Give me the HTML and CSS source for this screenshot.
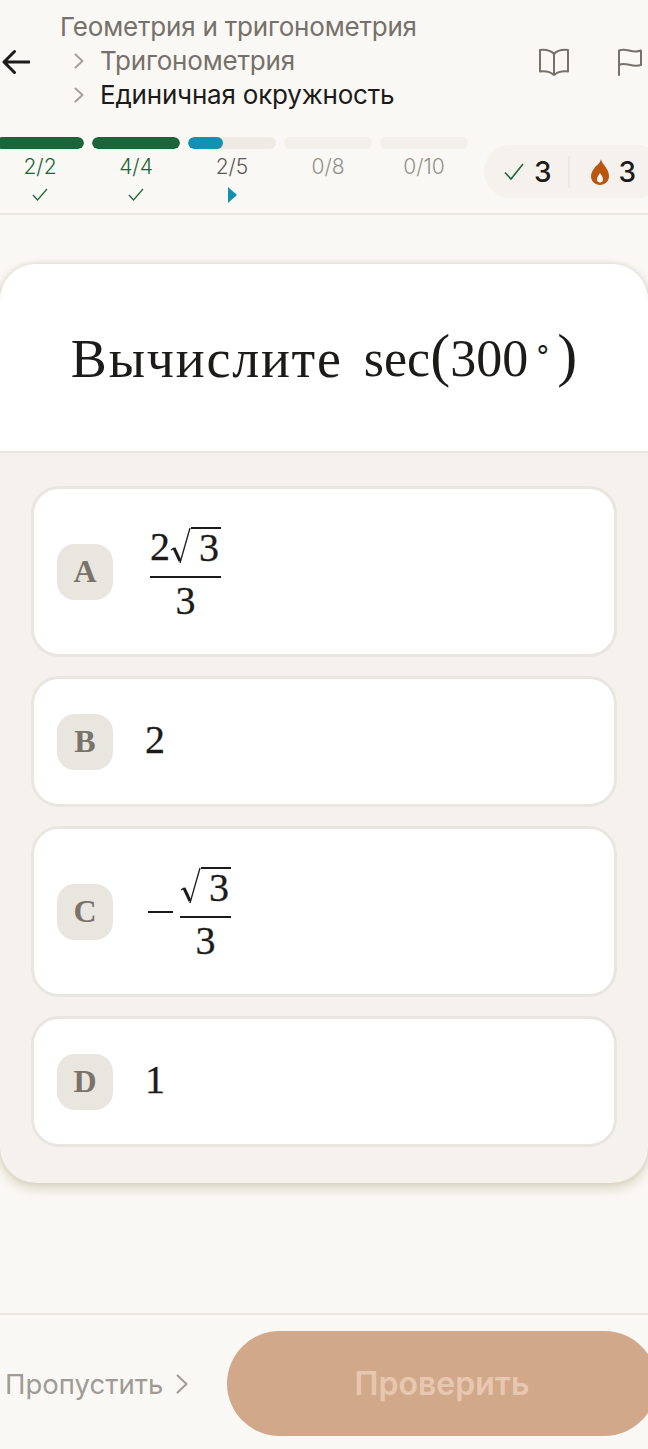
FILE: index.html
```html
<!DOCTYPE html>
<html lang="ru">

<head>
  <meta charset="UTF-8">
  <meta name="viewport" content="width=device-width, initial-scale=1.0">
  <title>Единичная окружность</title>
  <link rel="stylesheet" href="styles.css">
</head>

<body>
  <header class="top">
    <div class="top-row">
      <svg class="back" width="28" height="26" viewBox="0 0 28 26" fill="none" stroke="#1c1b19" stroke-width="3" stroke-linecap="round" stroke-linejoin="round">
        <path d="M27 13H2M12.500 2.500L2 13l10.500 10.500" />
      </svg>
      <div class="crumbs">
        <div class="crumb crumb-first">Геометрия и тригонометрия</div>
        <div class="crumb">
          <svg class="chev" width="10" height="16" viewBox="0 0 10 16" fill="none" stroke="#a5a19a" stroke-width="2" stroke-linecap="round" stroke-linejoin="round"><path d="M1.500 1.500L8.500 8l-7 6.500" /></svg>
          Тригонометрия
        </div>
        <div class="crumb crumb-current">
          <svg class="chev" width="10" height="16" viewBox="0 0 10 16" fill="none" stroke="#a5a19a" stroke-width="2" stroke-linecap="round" stroke-linejoin="round"><path d="M1.500 1.500L8.500 8l-7 6.500" /></svg>
          Единичная окружность
        </div>
      </div>
      <svg class="book" width="30" height="28" viewBox="0 0 30 28" fill="none" stroke="#76716a" stroke-width="2" stroke-linejoin="round" stroke-linecap="round">
        <path d="M15 6C12 2.500 6 1.500 1 2v21.500c5-.5 10 0 14 3.500 4-3.500 9-4 14-3.500V2c-5-.5-11 .5-14 4zM15 6v21" />
      </svg>
      <svg class="flag" width="24" height="28" viewBox="0 0 24 28" fill="none" stroke="#76716a" stroke-width="2" stroke-linejoin="round" stroke-linecap="round">
        <path d="M1 27V2.500C8-1 14 6 23 2.500V17C14 20 8 13.500 1 17" />
      </svg>
    </div>

    <div class="stats-row">
      <div class="steps">
        <div class="step step-done">
          <div class="bar"><div class="fill"></div></div>
          <div class="count">2/2</div>
          <svg class="tick" width="16" height="13" viewBox="0 0 16 13" fill="none" stroke="#1c6538" stroke-width="1.200"><path d="M1 7l4.500 5L15 1" /></svg>
        </div>
        <div class="step step-done">
          <div class="bar"><div class="fill"></div></div>
          <div class="count">4/4</div>
          <svg class="tick" width="16" height="13" viewBox="0 0 16 13" fill="none" stroke="#1c6538" stroke-width="1.200"><path d="M1 7l4.500 5L15 1" /></svg>
        </div>
        <div class="step step-active">
          <div class="bar"><div class="fill" style="width: 40%"></div></div>
          <div class="count">2/5</div>
          <svg class="tick tick-now" width="10" height="16" viewBox="0 0 10 16" fill="#1490b0"><path d="M1 0l9 8-9 8z" /></svg>
        </div>
        <div class="step step-todo">
          <div class="bar"></div>
          <div class="count">0/8</div>
        </div>
        <div class="step step-todo">
          <div class="bar"></div>
          <div class="count">0/10</div>
        </div>
      </div>
      <div class="pill">
        <svg width="20" height="17" viewBox="0 0 20 17" fill="none" stroke="#1c6538" stroke-width="1.600"><path d="M1 9.500L7 16 19 1" /></svg>
        <span class="pill-num">3</span>
        <span class="pill-sep"></span>
        <svg class="flame" width="18" height="26" viewBox="0 0 18 26">
          <path fill="#b9560f" d="M10 0c.5 5 8 9 8 17 0 5.500-4 9-9 9s-9-3.500-9-9c0-4 2.500-6.500 4.500-9.500C7 5.500 9.500 3.500 10 0z" />
          <path fill="#f9f7f4" d="M9 14c1.500 2.500 3 4 3 6.500 0 2-1.300 3-3 3s-3-1-3-3c0-2.500 1.500-4 3-6.500z" />
        </svg>
        <span class="pill-num">3</span>
      </div>
    </div>
  </header>

  <main class="card">
    <div class="question">
      <span class="word">Вычислите</span>
      <span class="expr">sec<span class="paren">(</span>300<sup class="deg">∘</sup><span class="paren">)</span></span>
    </div>

    <div class="options">
      <div class="option">
        <div class="letter">A</div>
        <div class="math math-a">
          <div class="frac">
            <div class="num">2<span class="sqrt"><svg width="21" height="38" viewBox="0 0 21 38" fill="none" stroke="#1c1b19"><path stroke-width="1.300" d="M1 23l3-2" /><path stroke-width="3" d="M4 21l6 13" /><path stroke-width="1.300" d="M10 36L20 1" /></svg><span class="radicand">3</span></span></div>
            <div class="den">3</div>
          </div>
        </div>
      </div>

      <div class="option">
        <div class="letter">B</div>
        <div class="math math-plain">2</div>
      </div>

      <div class="option">
        <div class="letter">C</div>
        <div class="math math-c">
          <span class="minus"></span>
          <div class="frac">
            <div class="num"><span class="sqrt"><svg width="21" height="38" viewBox="0 0 21 38" fill="none" stroke="#1c1b19"><path stroke-width="1.300" d="M1 23l3-2" /><path stroke-width="3" d="M4 21l6 13" /><path stroke-width="1.300" d="M10 36L20 1" /></svg><span class="radicand">3</span></span></div>
            <div class="den">3</div>
          </div>
        </div>
      </div>

      <div class="option">
        <div class="letter">D</div>
        <div class="math math-plain">1</div>
      </div>
    </div>
  </main>

  <footer class="bottom">
    <div class="skip">
      Пропустить
      <svg width="12" height="20" viewBox="0 0 12 20" fill="none" stroke="#9f9b94" stroke-width="2" stroke-linecap="round" stroke-linejoin="round"><path d="M1.500 1.500L10.500 10l-9 8.500" /></svg>
    </div>
    <div class="check">Проверить</div>
  </footer>
</body>

</html>
```

FILE: styles.css
```css
body {
  margin: 0;
  width: 648px;
  height: 1449px;
  overflow: hidden;
  background-color: #faf8f5;
  font-family: Inter, "Noto Sans", sans-serif;
  color: #1c1b19;
}

/* header */
.top {
  box-sizing: border-box;
  height: 215px;
  padding-top: 10px;
  border-bottom: 2px solid #eae7e1;
  overflow: hidden;
}

.top-row {
  display: flex;
  align-items: center;
  height: 102px;
  padding-left: 2px;
}

.back {
  flex: none;
  margin-top: 2px;
}

.crumbs {
  margin-left: 30px;
  width: 479px;
  font-size: 26px;
  letter-spacing: -0.2px;
  line-height: 34px;
  color: #76716a;
}

.crumb {
  display: flex;
  align-items: center;
  padding-left: 14px;
}

.crumb-first {
  padding-left: 0;
}

.crumb-current {
  color: #1c1b19;
}

.chev {
  flex: none;
  margin-right: 16px;
}

.book {
  flex: none;
  margin-top: 2px;
}

.flag {
  flex: none;
  margin-left: 49px;
  margin-top: 2px;
}

/* progress */
.stats-row {
  display: flex;
  align-items: flex-start;
  margin-top: 25px;
}

.steps {
  display: flex;
  gap: 8px;
  margin-left: -4px;
}

.step {
  width: 88px;
  display: flex;
  flex-direction: column;
  align-items: center;
}

.bar {
  width: 100%;
  height: 12px;
  border-radius: 6px;
  background-color: #efebe4;
  overflow: hidden;
}

.step-todo .bar {
  background-color: #f3f0eb;
}

.fill {
  height: 100%;
  border-radius: 6px;
  background-color: #1c6538;
}

.step-active .fill {
  background-color: #1490b0;
}

.count {
  margin-top: 5px;
  font-size: 21px;
  line-height: 26px;
  font-weight: 300;
}

.step-done .count {
  color: #1c6538;
}

.step-active .count {
  color: #5d5a54;
}

.step-todo .count {
  color: #96928b;
}

.tick {
  margin-top: 8px;
}

.tick-now {
  margin-top: 7px;
}

.pill {
  display: flex;
  align-items: center;
  flex: none;
  box-sizing: border-box;
  width: 180px;
  height: 53px;
  margin-left: 16px;
  margin-top: 8px;
  padding-left: 20px;
  border-radius: 27px;
  background-color: #f5f2ee;
}

.pill-num {
  margin-left: 10px;
  font-size: 28px;
  font-weight: 500;
}

.pill-sep {
  width: 2px;
  height: 32px;
  margin: 0 21px 0 16px;
  background-color: #ece9e3;
}

.flame {
  flex: none;
}

/* question card */
.card {
  margin-top: 49px;
  border-radius: 36px;
  background-color: #f5f2ee;
  box-shadow: 0 -1px 5px rgba(120, 115, 100, 0.18), 0 5px 12px rgba(165, 155, 105, 0.4);
  overflow: hidden;
}

.question {
  box-sizing: border-box;
  height: 189px;
  padding-top: 2px;
  display: flex;
  align-items: center;
  justify-content: center;
  gap: 21px;
  background-color: #fff;
  border-bottom: 2px solid #e9e6df;
  font-family: "Liberation Serif", serif;
  font-size: 54px;
}

.word {
  letter-spacing: 1.800px;
}

.expr {
  display: inline-flex;
  align-items: center;
  font-size: 52px;
}

.paren {
  font-size: 60px;
  line-height: 1;
  margin-top: -8px;
}

.deg {
  font-size: 28px;
  line-height: 1;
  margin: -22px 5px 0 6px;
}

.options {
  display: flex;
  flex-direction: column;
  gap: 19px;
  padding: 33px 31px 36px;
}

.option {
  display: flex;
  align-items: center;
  box-sizing: border-box;
  min-height: 131px;
  padding: 0 23px;
  border: 3px solid #e9e6df;
  border-radius: 28px;
  background-color: #fff;
}

.letter {
  flex: none;
  width: 56px;
  height: 56px;
  display: flex;
  align-items: center;
  justify-content: center;
  border-radius: 18px;
  background-color: #e9e6df;
  color: #7a736a;
  font-family: "Liberation Serif", serif;
  font-weight: 700;
  font-size: 32px;
}

/* math */
.math {
  margin-left: 32px;
  font-family: "Liberation Serif", serif;
  font-size: 40px;
  line-height: 44px;
  -webkit-text-stroke: 0.3px #1c1b19;
}

.math-plain {
  padding-bottom: 3px;
}

.math-a {
  margin: 37.500px 0 37.500px 37px;
}

.math-c {
  display: flex;
  align-items: center;
  margin: 37.500px 0 37.500px 35px;
}

.frac {
  display: flex;
  flex-direction: column;
  align-items: stretch;
  text-align: center;
}

.num {
  display: flex;
  align-items: flex-end;
  justify-content: center;
  height: 51px;
  line-height: 40px;
  padding-bottom: 9px;
  box-sizing: border-box;
  border-bottom: 2px solid #1c1b19;
}

.den {
  height: 39px;
  line-height: 46px;
}

.sqrt {
  display: inline-flex;
  align-items: flex-end;
}

.sqrt svg {
  flex: none;
  margin-bottom: 2px;
}

.radicand {
  padding: 0 2px 0 8px;
  border-top: 2px solid #1c1b19;
  line-height: 38px;
}

.minus {
  width: 25px;
  height: 2px;
  margin-right: 7px;
  background-color: #1c1b19;
}

/* footer */
.bottom {
  display: flex;
  align-items: center;
  height: 137px;
  margin-top: 130px;
  border-top: 2px solid #eae7e1;
}

.skip {
  display: flex;
  align-items: center;
  flex: none;
  gap: 13px;
  width: 227px;
  padding-left: 5px;
  box-sizing: border-box;
  font-size: 27.500px;
  color: #9f9b94;
}

.check {
  flex: none;
  width: 430px;
  height: 105px;
  display: flex;
  align-items: center;
  justify-content: center;
  border-radius: 53px;
  background-color: #d2a88a;
  color: #e8c7b0;
  font-size: 32px;
  font-weight: 600;
}
```
